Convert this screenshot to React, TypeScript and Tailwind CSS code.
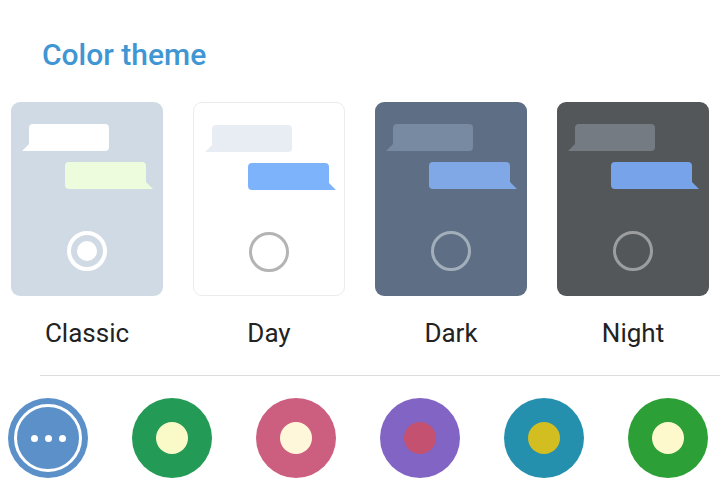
import React from 'react';

type Theme = {
  name: string;
  card: string;
  incoming: string;
  outgoing: string;
  ring: string;
  selected?: boolean;
};

const themes: Theme[] = [
  {
    name: 'Classic',
    card: 'bg-[#d0dae4]',
    incoming: '#ffffff',
    outgoing: '#eefcde',
    ring: 'border-white',
    selected: true,
  },
  {
    name: 'Day',
    card: 'bg-white border border-[#ececec]',
    incoming: '#e8edf4',
    outgoing: '#7db3fb',
    ring: 'border-[#b4b4b4]',
  },
  {
    name: 'Dark',
    card: 'bg-[#5e6f85]',
    incoming: '#788aa2',
    outgoing: '#80a8e6',
    ring: 'border-[#a3aebb]',
  },
  {
    name: 'Night',
    card: 'bg-[#53575a]',
    incoming: '#757b83',
    outgoing: '#77a3ea',
    ring: 'border-[#9b9d9f]',
  },
];

const accents = [
  { outer: 'bg-[#239a55]', inner: 'bg-[#f9fac8]' },
  { outer: 'bg-[#cc5e80]', inner: 'bg-[#fff7d9]' },
  { outer: 'bg-[#8164c3]', inner: 'bg-[#c4516f]' },
  { outer: 'bg-[#2590ad]', inner: 'bg-[#d3be22]' },
  { outer: 'bg-[#2c9f36]', inner: 'bg-[#fef9cc]' },
];

const Incoming = ({ color }: { color: string }) => (
  <svg width="87" height="27" viewBox="0 0 87 27" className="block">
    <path d="M7 4 Q7 0 11 0 H83 Q87 0 87 4 V23 Q87 27 83 27 H0 L7 20 Z" fill={color} />
  </svg>
);

const Outgoing = ({ color }: { color: string }) => (
  <svg width="88" height="27" viewBox="0 0 88 27" className="block">
    <path d="M4 0 H77 Q81 0 81 4 V20 L88 27 H4 Q0 27 0 23 V4 Q0 0 4 0 Z" fill={color} />
  </svg>
);

const ThemeCard = ({ theme }: { theme: Theme }) => (
  <div className="flex flex-col items-center w-[152px]">
    <div className={`w-[152px] h-[194px] rounded-[9px] pt-[22px] flex flex-col ${theme.card}`}>
      <div className="ml-[11px]">
        <Incoming color={theme.incoming} />
      </div>
      <div className="ml-[54px] mt-[11px]">
        <Outgoing color={theme.outgoing} />
      </div>
      <div
        className={`mx-auto mt-[42px] w-10 h-10 rounded-full flex items-center justify-center ${
          theme.selected ? 'border-4' : 'border-[3px]'
        } ${theme.ring}`}
      >
        {theme.selected && <div className="w-5 h-5 rounded-full bg-white" />}
      </div>
    </div>
    <span className="mt-[22px] text-[26px] leading-[30px] text-[#222222]">{theme.name}</span>
  </div>
);

export default function App() {
  return (
    <div className="w-[720px] h-[494px] bg-white overflow-hidden font-['Roboto',sans-serif]">
      <h1 className="pl-[42px] pt-[37px] h-[102px] text-[30px] leading-[36px] font-medium text-[#3f96d2]">
        Color theme
      </h1>
      <div className="flex gap-[30px] pl-[11px]">
        {themes.map((t) => (
          <ThemeCard key={t.name} theme={t} />
        ))}
      </div>
      <div className="ml-10 mt-[27px] border-t border-[#dcdcdc]" />
      <div className="flex gap-[44px] pl-2 mt-[22px]">
        <div className="w-20 h-20 rounded-full bg-[#5b90c8] p-[6px]">
          <div className="w-full h-full rounded-full border-[3px] border-white flex items-center justify-center gap-[7px]">
            <span className="w-[7px] h-[7px] rounded-full bg-white" />
            <span className="w-[7px] h-[7px] rounded-full bg-white" />
            <span className="w-[7px] h-[7px] rounded-full bg-white" />
          </div>
        </div>
        {accents.map((a, i) => (
          <div key={i} className={`w-20 h-20 rounded-full flex items-center justify-center ${a.outer}`}>
            <div className={`w-8 h-8 rounded-full ${a.inner}`} />
          </div>
        ))}
      </div>
    </div>
  );
}
